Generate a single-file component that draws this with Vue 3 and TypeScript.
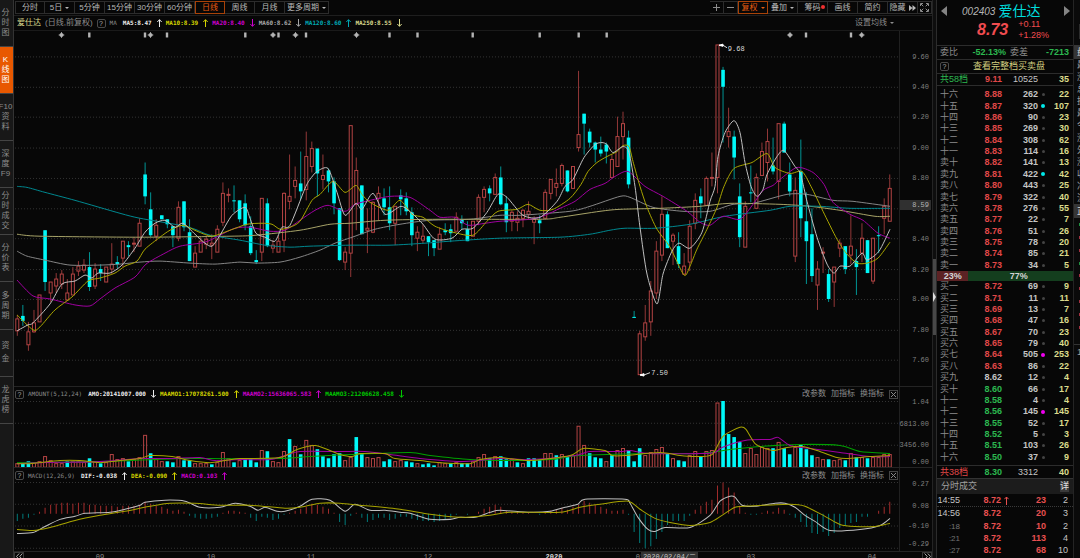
<script setup lang="ts">
type Point = [number, number]
interface Candle { x: number; up: boolean; high: number; top: number; bottom: number; low: number }
interface Bar { x: number; up: boolean; h: number }
interface Reading { text: string; tone: string; dir: 'up' | 'down' }
interface Level { name: string; price: string; tone: string; vol: number; dot: string; diff: number }
interface AxisLabel { text: string; top: number }

const FIRST_X = 17.3
const STEP = 5.557
const xAt = (i: number): number => FIRST_X + STEP * i

/* direction, high, body top, body bottom, low */
const candleSource = `
r 316 320 332 337|c 306 317 322 327|r 323 333 346 352|r 311 324 333 334|r 296 296 323 323|c 231 231 283 292
r 283 283 294 303|r 274 280 287 294|r 271 275 285 290|r 280 294 301 302|r 268 275 296 296|r 262 267 272 277
r 260 266 271 274|c 253 268 288 292|r 264 270 287 290|c 265 270 274 282|r 268 268 283 283|r 244 265 270 275
c 257 263 265 269|r 242 242 259 268|c 242 246 248 257|r 238 244 245 253|r 219 224 247 247|c 163 175 197 205
c 193 210 236 238|r 220 226 237 242|c 216 216 220 220|c 220 220 225 229|c 227 227 236 248|r 202 208 239 242
c 202 202 228 232|c 220 233 262 262|r 247 254 268 268|r 238 242 253 253|r 237 240 245 250|r 235 244 246 260
r 226 230 253 253|r 183 194 223 227|r 189 195 196 203|c 186 201 202 213|c 201 201 220 223|c 195 204 226 231
c 217 227 254 256|c 251 261 263 265|r 199 199 253 262|c 199 204 247 248|r 241 246 249 254|r 236 242 253 253
r 193 194 241 253|r 155 197 202 210|r 167 181 187 199|c 152 184 192 200|r 132 157 190 201|r 142 149 167 173
c 149 149 174 197|r 155 176 180 190|c 169 171 182 193|c 178 182 204 215|c 209 209 261 262|r 248 253 263 271
r 126 126 254 278|r 158 171 205 231|c 186 186 235 235|r 209 229 231 254|r 202 203 233 234|r 187 194 199 221
c 189 199 208 216|c 187 208 224 231|r 207 207 224 246|c 190 196 200 216|c 193 199 212 216|c 208 213 236 247
r 227 233 239 252|r 225 237 241 244|c 237 237 243 257|c 241 241 249 257|r 228 235 250 250|c 224 231 233 236
c 225 230 234 243|r 213 218 232 232|c 216 220 224 230|c 222 230 242 242|r 222 222 237 237|r 195 198 222 226
r 187 190 198 213|c 186 189 194 202|r 174 178 195 195|c 167 178 205 206|c 197 204 223 233|r 211 213 222 232
r 212 219 223 232|r 210 211 219 228|r 202 212 215 220|r 217 220 223 245|c 216 221 224 234|r 190 193 219 219
r 180 180 194 200|r 169 184 188 197|r 164 166 184 187|c 171 171 192 193|r 167 167 189 189|r 71 135 148 152
c 114 114 124 155|c 129 132 143 148|c 142 143 150 163|c 137 150 154 157|c 143 145 152 164|r 155 160 178 178
r 117 137 167 167|r 112 124 137 160|c 131 138 185 189|c 312 318 319 319|r 332 335 376 376|r 306 324 338 342
r 282 292 323 337|r 242 252 294 300|r 197 215 256 262|c 212 215 249 249|r 234 236 242 266|c 233 247 265 269
r 254 267 275 276|r 221 227 263 272|r 194 201 224 230|c 189 197 204 219|r 177 179 206 206|r 153 178 179 187
r 45 45 178 194|c 67 70 87 143|r 108 132 137 148|c 131 137 158 180|c 184 197 238 248|r 202 207 248 248
c 166 193 194 203|r 174 178 209 209|r 143 152 176 176|r 129 142 163 182|c 138 166 172 175|r 124 124 182 200
c 122 124 153 153|c 163 175 192 197|r 178 191 257 263|c 140 172 219 238|c 193 222 242 285|c 209 235 277 283
r 262 270 286 311|r 248 253 254 274|c 270 275 300 303|r 268 268 283 308|r 240 244 249 258|c 247 247 270 275
r 216 247 256 265|c 250 262 268 296|r 224 239 254 263|c 241 241 274 274|r 239 239 282 285|c 227 236 237 254
r 199 207 219 235|r 175 189 222 222`

const candles: Candle[] = candleSource.trim().split(/[|\n]/).map((item, i) => {
  const [dir, high, top, bottom, low] = item.trim().split(' ')
  return { x: xAt(i), up: dir === 'r', high: +high, top: +top, bottom: +bottom, low: +low }
})

const volumeSource =
  'r4 c4 c6 r5 r6 r11 r7 r4 r4 c6 r6 r6 r5 c9 r6 c4 r5 r13 r8 r9 c6 r8 r10 r32 c14 r8 r6 c6 c5 r11 c7 c7 r4 r4 r4 c3 r5 r15 r9 c5 ' +
  'r7 c9 c9 c5 r17 c16 r6 r5 r16 c28 r21 c13 r27 r22 c18 c11 c9 c13 c14 r7 r10 c30 c14 r10 r9 r10 c6 c8 r6 r7 c6 c5 r4 c3 c4 c2 r5 r4 c4 r5 ' +
  'c4 c4 r6 r10 r13 c9 r11 c11 c8 r8 c5 r4 c9 c9 c8 r14 r14 c12 r13 c11 r12 r41 r22 c14 c10 c9 r6 c12 r17 r19 c17 c6 c19 r12 r15 r18 r20 c14 r9 c7 ' +
  'c6 r12 r16 c11 r16 r17 r64 c66 c33 c30 c25 r14 r19 r13 r20 r19 c19 r25 c19 c13 r20 c23 c18 c12 r10 r8 c8 r7 r8 c7 r14 c10 r10 c9 r10 r10 r13 r13'

const volumes: Bar[] = volumeSource.split(' ').map((v, i) => ({ x: xAt(i), up: v[0] === 'r', h: +v.slice(1) }))

const macdHeights: number[] = [
  -7, -5, -4, -1, 2, 6, 9, 10, 11, 11, 10, 11, 11, 9, 9, 8, 8, 8, 7, 8, 8, 8, 9, 12, 10, 8, 7, 5, 3, 4, 2, -2, -4, -5, -5, -4, -3, 1, 3, 3,
  2, 1, -4, -7, -3, -4, -6, -5, -1, 1, 3, 5, 7, 10, 9, 7, 5, 1, -8, -11, -2, 1, -4, -8, -6, -4, -4, -6, -5, -3, -3, -5, -6, -7, -7, -8, -7, -6, -4, -1,
  0, -1, 0, 2, 5, 7, 9, 7, 3, 2, 2, 1, 1, 0, -1, 2, 3, 4, 6, 4, 7, 9, 13, 11, 9, 7, 5, 3, 3, 4, -1, -18, -29, -34, -32, -25, -18, -11, -7, -7,
  -7, -2, 4, 8, 12, 14, 28, 31, 26, 21, 8, 1, -1, -1, 1, 3, 2, 6, 4, -1, -4, -8, -13, -19, -20, -18, -22, -19, -14, -12, -9, -8, -3, -3, 0, 3, 7, 12,
]
const macdBars: Bar[] = macdHeights.map((h, i) => ({ x: xAt(i), up: h > 0, h: Math.abs(h) }))

/* Catmull-Rom smoothing through the sampled points */
function curve(source: string): string {
  const p: Point[] = source.split(' ').map((s) => s.split(',').map(Number) as Point)
  let d = `M${p[0][0]} ${p[0][1]}`
  for (let i = 0; i < p.length - 1; i++) {
    const a = p[Math.max(0, i - 1)]
    const b = p[i]
    const c = p[i + 1]
    const e = p[Math.min(p.length - 1, i + 2)]
    d += `C${b[0] + (c[0] - a[0]) / 8} ${b[1] + (c[1] - a[1]) / 8} ${c[0] - (e[0] - b[0]) / 8} ${c[1] - (e[1] - b[1]) / 8} ${c[0]} ${c[1]}`
  }
  return d
}

const priceLines = [
  { tone: 'l-grey', d: curve('17,252 27,257 45,261 70,266 100,266 120,265 140,263 160,262 190,264 215,265 240,263 256,264 280,263 300,258 320,251 335,244 355,237 375,230 400,225 430,221 470,220 500,216 520,216 570,212 590,207 620,197 630,198 653,208 683,212 710,212 733,205 753,204 787,195 807,195 833,201 853,202 890,207') },
  { tone: 'l-pale', d: curve('17,235 40,237 140,238 230,237 256,236 300,231 330,225 350,224 385,221 440,220 540,220 560,218 600,212 620,210 660,209 700,207 730,204 780,205 810,207 840,211 875,217 890,217') },
  { tone: 'l-teal', d: curve('17,187 27,188 45,193 75,201 120,214 140,219 180,226 195,230 210,236 240,241 265,246 290,248 310,247 350,246 390,246 425,244 450,242 500,239 560,238 590,235 610,231 625,229 655,229 690,225 725,217 770,211 790,207 820,207 850,209 890,209') },
  { tone: 'l-magenta', d: curve('17,281 33,297 50,300 75,306 90,307 100,300 115,289 135,278 146,265 165,254 180,247 205,243 220,236 235,229 250,228 270,232 285,231 300,221 315,211 328,206 345,212 355,205 370,201 390,197 410,198 430,211 440,218 455,218 468,226 485,224 500,222 530,220 545,216 560,209 575,202 590,190 605,184 615,177 628,172 645,187 663,197 687,212 700,223 710,226 723,217 740,220 753,205 763,191 773,186 780,180 797,168 813,173 824,185 833,203 850,215 863,221 878,234 890,239') },
  { tone: 'l-yellow', d: curve('17,316 33,331 40,328 55,311 72,298 88,282 100,279 115,274 125,267 137,262 145,250 160,238 170,231 183,226 197,232 212,237 230,231 247,225 262,224 272,225 280,230 290,228 300,222 312,201 320,195 333,182 345,193 356,186 362,195 370,203 388,211 400,201 412,215 423,218 435,227 453,233 473,236 487,222 498,212 517,210 528,205 540,211 553,210 570,199 581,185 588,172 597,163 607,157 617,152 623,146 629,147 633,162 640,187 647,208 657,230 670,248 684,276 690,267 697,250 707,230 717,208 724,187 734,169 752,163 767,154 775,168 790,174 802,172 811,187 823,212 837,240 847,255 857,264 867,264 878,259 890,243') },
  { tone: 'l-white', d: curve('17,332 28,326 33,324 50,305 62,285 75,282 85,276 92,279 98,274 110,274 122,266 135,249 145,233 155,224 165,221 175,228 183,224 195,235 205,244 212,247 220,236 232,216 245,208 250,219 256,234 265,238 275,242 282,228 290,226 305,189 310,180 317,172 328,169 337,193 345,216 356,204 362,210 373,194 385,215 401,207 412,214 423,225 435,240 452,239 462,230 473,229 487,213 498,195 507,198 523,216 540,218 557,202 565,187 573,180 584,158 595,145 602,143 607,145 613,153 623,147 629,153 635,187 640,228 647,275 657,305 663,275 672,252 679,244 690,249 702,233 710,202 715,187 718,157 725,133 734,121 740,133 745,163 751,187 757,197 763,190 767,175 777,157 784,151 795,167 800,173 804,189 807,202 817,238 827,265 834,274 840,267 850,267 862,254 867,261 879,252 890,230') },
]

const volumeLines = [
  { tone: 'l-green', d: curve('17,463 100,462 180,459 210,459 280,459 310,457 350,455 410,453 430,456 470,460 510,461 550,460 580,456 650,454 700,454 730,450 760,447 800,445 840,446 860,452 890,454') },
  { tone: 'l-magenta', d: curve('17,464 40,463 100,462 140,459 170,459 200,458 215,461 240,460 270,460 285,456 300,452 340,452 365,452 390,455 420,459 460,462 500,459 530,460 575,456 590,452 620,452 630,451 650,454 700,454 715,453 722,448 745,441 770,440 778,438 790,446 810,449 840,453 870,457 890,457') },
  { tone: 'l-yellow', d: curve('17,464 30,464 60,461 80,461 100,463 120,461 140,459 150,456 172,457 190,461 210,463 225,461 240,459 280,458 297,450 315,446 330,451 340,455 352,457 360,454 385,454 395,459 420,461 440,463 470,464 480,460 500,458 530,461 570,456 583,449 605,451 612,456 625,456 660,453 680,456 695,457 712,455 723,437 740,428 746,430 756,445 773,451 787,448 803,447 820,452 837,458 847,459 870,457 890,456') },
]

const macdLines = [
  { tone: 'l-white', d: curve('17,534 33,533 45,527 60,520 75,517 85,514 110,513 125,510 140,506 145,503 165,501 185,502 200,508 220,508 235,504 250,507 258,511 265,508 277,512 285,512 300,507 312,500 330,501 345,512 355,505 370,511 385,511 400,513 410,514 430,520 450,520 460,518 475,518 490,513 500,511 530,513 550,512 565,508 578,505 585,500 625,500 630,504 638,518 648,530 655,532 665,528 690,528 710,516 720,502 730,497 735,498 742,506 755,507 775,504 785,504 795,508 805,516 815,522 830,531 860,530 880,526 890,519') },
  { tone: 'l-yellow', d: curve('17,530 33,531 50,528 75,521 100,516 125,512 150,507 170,504 195,504 220,506 250,506 285,509 300,508 320,504 340,504 360,506 400,510 430,515 460,518 490,516 510,513 560,513 580,508 600,505 628,502 640,510 655,519 670,523 690,526 710,523 722,516 735,508 745,507 790,505 805,507 825,517 840,525 855,527 875,527 885,525 890,524') },
]

const eventBars: number[] = [89.3, 145, 167, 245.3, 278.5, 306, 389.5, 417.5, 472.7, 539.7, 578.7, 606.7, 806, 851]
const eventStars: number[] = [61.5, 150.5, 273, 295.5, 356.5, 790, 861.7]

const PRICE_TOP = 31
const PRICE_H = 356
const priceGrid: number[] = [57, 87.5, 117.5, 148.5, 179, 209.5, 239.5, 270.5, 300.5, 331.5, 361.5]
const priceLabels: AxisLabel[] = priceGrid.map((y, i) => ({ text: (9.6 - 0.2 * i).toFixed(2), top: ((y - PRICE_TOP) / PRICE_H) * 100 }))
const volumeLabels: AxisLabel[] = [
  { text: '1.04', top: 19 }, { text: '6813.00', top: 46 }, { text: '3456.00', top: 72 }, { text: '0.00', top: 93 },
]
const macdLabels: AxisLabel[] = [
  { text: '0.27', top: 19 }, { text: '0.08', top: 45 }, { text: '-0.10', top: 70 }, { text: '-0.29', top: 91 },
]

const dates = [
  { text: '09', x: 100 }, { text: '10', x: 211 }, { text: '11', x: 311 }, { text: '12', x: 428 },
  { text: '2020', x: 554, year: true }, { text: '02', x: 640 }, { text: '03', x: 751 }, { text: '04', x: 872 },
].map((d) => ({ ...d, left: ((d.x - 14) / 918) * 100 }))

const rail: string[][] = [
  ['分', '时', '图'], ['K', '线', '图'], ['F10', '资', '料'], ['深', '度', 'F9'], ['分', '时', '成', '交'],
  ['分', '价', '表'], ['多', '周', '期'], ['资', '金'], ['龙', '虎', '榜'],
]

const periods = [
  { text: '分时' }, { text: '5日', menu: true }, { text: '5分钟' }, { text: '15分钟' }, { text: '30分钟' },
  { text: '60分钟' }, { text: '日线', active: true }, { text: '周线' }, { text: '月线' }, { text: '更多周期', menu: true, wide: true },
]
const tools = [
  { text: '复权', active: true, menu: true }, { text: '叠加', menu: true }, { text: '筹码', badge: true },
  { text: '画线' }, { text: '简约' }, { text: '隐藏', hide: true },
]

const maReadings: Reading[] = [
  { text: 'MA5:8.47', tone: 't-white', dir: 'up' }, { text: 'MA10:8.39', tone: 't-yellow', dir: 'up' },
  { text: 'MA20:8.40', tone: 't-magenta', dir: 'down' }, { text: 'MA60:8.62', tone: 't-grey', dir: 'down' },
  { text: 'MA120:8.60', tone: 't-teal', dir: 'up' }, { text: 'MA250:8.55', tone: 't-pale', dir: 'down' },
]
const amountReadings: Reading[] = [
  { text: 'AMO:20141007.000', tone: 't-white', dir: 'down' }, { text: 'MAAMO1:17078261.500', tone: 't-yellow', dir: 'up' },
  { text: 'MAAMO2:15636065.583', tone: 't-magenta', dir: 'up' }, { text: 'MAAMO3:21206628.458', tone: 't-green', dir: 'down' },
]
const macdReadings: Reading[] = [
  { text: 'DIF:-0.038', tone: 't-white', dir: 'up' }, { text: 'DEA:-0.090', tone: 't-yellow', dir: 'up' },
  { text: 'MACD:0.103', tone: 't-magenta', dir: 'up' },
]
const paneActions: string[] = ['改参数', '加指标', '换指标']

const level = (line: string): Level => {
  const [name, price, vol, diff, dot = ''] = line.split(' ')
  const value = +price
  return { name, price, vol: +vol, diff: +diff, dot, tone: value > 8.62 ? 't-red' : value < 8.62 ? 't-lime' : 't-light' }
}
const asks: Level[] = [
  '十六 8.88 262 22', '十五 8.87 320 107 dot-cyan', '十四 8.86 90 23', '十三 8.85 269 30', '十二 8.84 308 62', '十一 8.83 114 16',
  '卖十 8.82 141 13', '卖九 8.81 422 42 dot-cyan', '卖八 8.80 443 25', '卖七 8.79 322 40', '卖六 8.78 276 55', '卖五 8.77 22 7',
  '卖四 8.76 51 26', '卖三 8.75 78 20', '卖二 8.74 85 21', '卖一 8.73 34 5',
].map(level)
const bids: Level[] = [
  '买一 8.72 69 9', '买二 8.71 11 11', '买三 8.69 13 7', '买四 8.68 47 16', '买五 8.67 70 23', '买六 8.65 79 40',
  '买七 8.64 505 253 dot-magenta', '买八 8.63 86 22', '买九 8.62 12 4', '买十 8.60 66 17', '十一 8.58 4 4',
  '十二 8.56 145 145 dot-magenta', '十三 8.55 52 17', '十四 8.52 5 3', '十五 8.51 103 26', '十六 8.50 37 9',
].map(level)
const books = [asks, bids]
const bidShare = 23

const ticks = [
  { time: '14:55', price: '8.72', vol: 23, n: 2, rise: true, major: true }, { time: '14:56', price: '8.72', vol: 20, n: 3, major: true },
  { time: ':18', price: '8.72', vol: 10, n: 2 }, { time: ':21', price: '8.72', vol: 113, n: 4 }, { time: ':27', price: '8.72', vol: 68, n: 10 },
]

const edgeItems: string[] = ['最', '涨', '总', '换', '最', '今', '涨', '外', '涨', '收', '净', '流']
const edgeDots: string[] = ['g', 'r', 'r', 'g', 'r', 'r', 'r', 'r', 'r']
</script>

<template>
  <div class="terminal">
    <nav class="rail">
      <button v-for="(item, i) in rail" :key="i" class="rail-item" :class="{ on: i === 1, airy: item.length === 2 }">
        <span v-for="(part, j) in item" :key="j">{{ part }}</span>
      </button>
      <div class="rail-rest"></div>
    </nav>

    <main class="charts">
      <div class="toolbar">
        <button v-for="p in periods" :key="p.text" class="tab" :class="{ on: p.active, wide: p.wide }">
          {{ p.text }}<i v-if="p.menu" class="caret"></i>
        </button>
        <div class="spacer"></div>
        <button class="tab small" aria-label="放大"><svg width="7" height="7" viewBox="0 0 7 7"><path d="M0 3.5H7M3.5 0V7" /></svg></button>
        <button class="tab small" aria-label="缩小"><svg width="7" height="7" viewBox="0 0 7 7"><path d="M0 3.5H7" /></svg></button>
        <button v-for="t in tools" :key="t.text" class="tab" :class="{ on: t.active }">
          {{ t.text }}<i v-if="t.menu" class="caret"></i><i v-if="t.badge" class="badge"></i>
          <svg v-if="t.hide" class="solid" width="7" height="6" viewBox="0 0 7 6"><path d="M0 0L3.5 3L0 6ZM3.5 0L7 3L3.5 6Z" /></svg>
        </button>
        <button class="tab small" aria-label="全屏">
          <svg width="9" height="9" viewBox="0 0 9 9"><path d="M.5 3V.5H3M6 .5H8.5V3M8.5 6V8.5H6M3 8.5H.5V6M1 1L3.3 3.3M8 1L5.7 3.3M8 8L5.7 5.7M1 8L3.3 5.7" /></svg>
        </button>
      </div>

      <div class="info">
        <span class="info-name">爱仕达</span>
        <span class="info-mode">(日线,前复权)</span>
        <button class="help">?</button>
        <span class="tag">MA</span>
        <span v-for="r in maReadings" :key="r.text" class="reading" :class="r.tone">
          {{ r.text }}
          <svg width="5" height="8" viewBox="0 0 5 8"><path :d="r.dir === 'up' ? 'M2.5 8V.7M.3 3L2.5 .7L4.7 3' : 'M2.5 0V7.3M.3 5L2.5 7.3L4.7 5'" /></svg>
        </span>
        <div class="spacer"></div>
        <button class="link-btn setting">设置均线<i class="caret"></i></button>
      </div>

      <section class="pane pane-price">
        <div class="plot">
          <svg class="canvas" viewBox="14 31 885 356" preserveAspectRatio="none">
            <path v-for="y in priceGrid" :key="y" class="grid-line" :d="`M15 ${y}H899`" />
            <rect v-for="x in eventBars" :key="x" class="event" :x="x - 1.2" y="32.5" width="2.4" height="5" />
            <g v-for="x in eventStars" :key="x">
              <circle class="event" :cx="x" cy="35" r="2" />
              <path class="event-rays" :d="`M${x - 2.8} 35H${x + 2.8}M${x} 32.2V37.8`" />
            </g>
            <g v-for="(c, i) in candles" :key="i">
              <template v-if="c.up">
                <path class="wick-up" :d="`M${c.x} ${c.high}V${c.top}M${c.x} ${c.bottom}V${c.low}`" />
                <rect class="body-up" :x="c.x - 1.5" :y="c.top" width="3" :height="Math.max(1, c.bottom - c.top)" />
              </template>
              <template v-else>
                <path class="wick-down" :d="`M${c.x} ${c.high}V${c.low}`" />
                <rect class="body-down" :x="c.x - 1.8" :y="c.top" width="3.6" :height="c.bottom - c.top" />
              </template>
            </g>
            <path v-for="l in priceLines" :key="l.tone" class="line" :class="l.tone" :d="l.d" />
            <path class="pointer" d="M719 45.3H723L727 47.8M640 376.3H644L650 374" />
            <path class="pointer-tip" d="M719 45.3L723 44.2V46.4ZM640 376.3L644 375V377.4Z" />
          </svg>
          <span class="mark mark-high">9.68</span>
          <span class="mark mark-low">7.50</span>
        </div>
        <div class="axis">
          <span v-for="l in priceLabels" :key="l.text" class="axis-label" :style="{ top: l.top + '%' }">{{ l.text }}</span>
          <span class="axis-label current">8.59</span>
        </div>
      </section>

      <section class="pane pane-volume">
        <div class="pane-main">
          <header class="pane-head">
            <button class="help">?</button>
            <span class="tag">AMOUNT(5,12,24)</span>
            <span v-for="r in amountReadings" :key="r.text" class="reading" :class="r.tone">
              {{ r.text }}
              <svg width="5" height="8" viewBox="0 0 5 8"><path :d="r.dir === 'up' ? 'M2.5 8V.7M.3 3L2.5 .7L4.7 3' : 'M2.5 0V7.3M.3 5L2.5 7.3L4.7 5'" /></svg>
            </span>
            <div class="spacer"></div>
            <button v-for="a in paneActions" :key="a" class="link-btn">{{ a }}</button>
            <button class="close" aria-label="关闭"><svg width="5" height="5" viewBox="0 0 5 5"><path d="M0 0L5 5M5 0L0 5" /></svg></button>
          </header>
          <div class="plot">
            <svg class="canvas" viewBox="14 402 885 66" preserveAspectRatio="none">
              <path class="grid-line" d="M15 402.5H899M15 424H899M15 445.7H899" />
              <g v-for="(b, i) in volumes" :key="i">
                <rect v-if="b.up" class="body-up" :x="b.x - 1.5" :y="468 - b.h" width="3" :height="b.h - 0.5" />
                <rect v-else class="body-down" :x="b.x - 1.8" :y="467.7 - b.h" width="3.6" :height="b.h" />
              </g>
              <path v-for="l in volumeLines" :key="l.tone" class="line" :class="l.tone" :d="l.d" />
            </svg>
          </div>
        </div>
        <div class="axis">
          <span v-for="l in volumeLabels" :key="l.text" class="axis-label" :style="{ top: l.top + '%' }">{{ l.text }}</span>
        </div>
      </section>

      <section class="pane pane-macd">
        <div class="pane-main">
          <header class="pane-head">
            <button class="help">?</button>
            <span class="tag">MACD(12,26,9)</span>
            <span v-for="r in macdReadings" :key="r.text" class="reading" :class="r.tone">
              {{ r.text }}
              <svg width="5" height="8" viewBox="0 0 5 8"><path :d="r.dir === 'up' ? 'M2.5 8V.7M.3 3L2.5 .7L4.7 3' : 'M2.5 0V7.3M.3 5L2.5 7.3L4.7 5'" /></svg>
            </span>
            <div class="spacer"></div>
            <button v-for="a in paneActions" :key="a" class="link-btn">{{ a }}</button>
            <button class="close" aria-label="关闭"><svg width="5" height="5" viewBox="0 0 5 5"><path d="M0 0L5 5M5 0L0 5" /></svg></button>
          </header>
          <div class="plot">
            <svg class="canvas" viewBox="14 483 885 68" preserveAspectRatio="none">
              <path class="grid-line" d="M15 483.5H899M15 505H899M15 526.5H899M15 548.5H899" />
              <path v-for="(b, i) in macdBars" :key="i" :class="b.up ? 'macd-up' : 'macd-down'" :d="`M${b.x} 514.5V${b.up ? 514.5 - b.h : 514.5 + b.h}`" />
              <path v-for="l in macdLines" :key="l.tone" class="line" :class="l.tone" :d="l.d" />
            </svg>
          </div>
        </div>
        <div class="axis">
          <span v-for="l in macdLabels" :key="l.text" class="axis-label" :style="{ top: l.top + '%' }">{{ l.text }}</span>
        </div>
      </section>

      <footer class="dates">
        <button class="page-btn" aria-label="更早"><svg width="7" height="7" viewBox="0 0 7 7"><path d="M3.2 .5L.5 3.5L3.2 6.5M6.4 .5L3.7 3.5L6.4 6.5" /></svg></button>
        <span v-for="d in dates" :key="d.text" class="date" :class="{ year: d.year }" :style="{ left: d.left + '%' }">{{ d.text }}</span>
        <span class="date-tag">2020/02/04/二</span>
        <div class="spacer"></div>
        <button class="page-btn" aria-label="更晚"><svg width="7" height="7" viewBox="0 0 7 7"><path d="M.6 .5L3.3 3.5L.6 6.5M3.8 .5L6.5 3.5L3.8 6.5" /></svg></button>
      </footer>
    </main>

    <div class="splitter">
      <button class="thumb" aria-label="展开侧栏"><svg width="3" height="10" viewBox="0 0 3 10"><path d="M0 0L3 5L0 10Z" /></svg></button>
    </div>

    <aside class="quote">
      <header class="quote-head">
        <button class="step" aria-label="上一只"><svg width="6" height="10" viewBox="0 0 6 10"><path d="M6 0L0 5L6 10Z" /></svg></button>
        <div class="ident">
          <div class="ident-row"><span class="code">002403</span><span class="stock">爱仕达</span></div>
          <div class="price-row">
            <strong class="last">8.73</strong>
            <div class="change"><span>+0.11</span><span>+1.28%</span></div>
          </div>
        </div>
        <button class="step" aria-label="下一只"><svg width="6" height="10" viewBox="0 0 6 10"><path d="M0 0L6 5L0 10Z" /></svg></button>
      </header>
      <div class="ratio">
        <span class="label">委比</span><b class="t-lime">-52.13%</b><span class="label">委差</span><b class="t-lime">-7213</b>
      </div>
      <div class="full-book"><button class="help">?</button><a href="#">查看完整档买卖盘</a></div>

      <div class="total total-ask">
        <span class="t-lime">共58档</span><b class="t-red">9.11</b><span class="t-light">10525</span><i></i><b class="t-pale">35</b>
      </div>
      <template v-for="(book, k) in books" :key="k">
        <div v-if="k === 1" class="balance">
          <b class="balance-buy" :style="{ width: bidShare + '%' }">{{ bidShare }}%</b>
          <b class="balance-sell">{{ 100 - bidShare }}%</b>
        </div>
        <table class="book">
          <tbody>
            <tr v-for="l in book" :key="l.name + l.price">
              <td class="label">{{ l.name }}</td>
              <td class="num" :class="l.tone">{{ l.price }}</td>
              <td class="num t-light">{{ l.vol }}</td>
              <td class="dot-cell"><i class="dot" :class="l.dot"></i></td>
              <td class="num t-pale">{{ l.diff }}</td>
            </tr>
          </tbody>
        </table>
      </template>
      <div class="total total-bid">
        <span class="t-red">共38档</span><b class="t-lime">8.30</b><span class="t-light">3312</span><i></i><b class="t-pale">40</b>
      </div>

      <div class="ticks-head"><span>分时成交</span><button>详</button></div>
      <table class="ticks">
        <tbody>
          <tr v-for="t in ticks" :key="t.time">
            <td class="time" :class="{ minor: !t.major }">{{ t.time }}</td>
            <td class="tick-price">{{ t.price }}</td>
            <td class="rise"><svg v-if="t.rise" width="5" height="9" viewBox="0 0 5 9"><path d="M2.5 9V1M.4 3.2L2.5 1L4.6 3.2" /></svg></td>
            <td class="tick-vol">{{ t.vol }}</td>
            <td class="tick-n">{{ t.n }}</td>
          </tr>
        </tbody>
      </table>
    </aside>

    <div class="edge">
      <div class="edge-top"></div>
      <div class="edge-head">盘</div>
      <div class="edge-list"><span v-for="(e, i) in edgeItems" :key="i">{{ e }}</span></div>
      <div class="edge-head">正</div>
      <div class="edge-dots"><i v-for="(d, i) in edgeDots" :key="i" :class="d"></i></div>
      <div class="edge-foot">1</div>
    </div>
  </div>
</template>

<style>
body {
  margin: 0;
  background: #070707;
}
</style>

<style scoped>
.terminal {
  display: grid;
  grid-template-columns: 14px minmax(0, 1fr) 5px 136px 7px;
  height: 100vh;
  min-height: 500px;
  overflow: hidden;
  background: #070707;
  color: #b4b4b4;
  font: 8px/10px "Liberation Sans", "Noto Sans CJK SC", sans-serif;
}
.terminal * {
  box-sizing: border-box;
}
button {
  margin: 0;
  padding: 0;
  border: 0;
  background: none;
  color: inherit;
  font: inherit;
}
svg {
  display: block;
  flex: none;
  fill: none;
  stroke: currentColor;
  stroke-width: 1;
}
.spacer {
  flex: 1;
}
.t-white { color: #ededed; }
.t-light { color: #c4c4c4; }
.t-grey { color: #a8a8a8; }
.t-yellow { color: #d4d400; }
.t-magenta { color: #cc00cc; }
.t-teal { color: #00a8b4; }
.t-pale { color: #dada8c; }
.t-green { color: #00c800; }
.t-red { color: #e04848; }
.t-lime { color: #2cb850; }

/* left rail */
.rail {
  display: flex;
  flex-direction: column;
  border-right: 1px solid #333;
  background: #181818;
}
.rail-item {
  display: flex;
  flex: 47 1 0;
  flex-direction: column;
  align-items: center;
  justify-content: center;
  padding-right: 2px;
  border-bottom: 1px solid #444;
  color: #8c8c8c;
}
.rail-item.airy {
  gap: 3px;
}
.rail-item.on {
  background: #e85800;
  color: #fff;
}
.rail-rest {
  flex: 137 1 0;
}

/* toolbar */
.charts {
  display: flex;
  flex-direction: column;
  min-width: 0;
}
.toolbar {
  display: flex;
  flex: none;
  height: 16px;
  padding: 1px 0 1px 1px;
  border-bottom: 1px solid #1e1e1e;
}
.tab {
  position: relative;
  display: flex;
  align-items: center;
  justify-content: center;
  gap: 3px;
  min-width: 30px;
  border: 1px solid #2c2c2c;
  border-left-width: 0;
  color: #b8b8b8;
}
.tab:first-child {
  border-left-width: 1px;
}
.tab.wide {
  min-width: 44px;
}
.tab.small {
  min-width: 14px;
  color: #8c8c8c;
}
.tab.on {
  border: 1px solid #a84208;
  color: #e85c10;
}
.caret {
  border: 2px solid transparent;
  border-top-color: currentColor;
  border-bottom-width: 0;
}
.badge {
  position: absolute;
  top: 3px;
  right: 2px;
  width: 4px;
  height: 4px;
  border-radius: 50%;
  background: #f03030;
}
.solid {
  fill: currentColor;
  stroke: none;
}

/* readings */
.info,
.pane-head {
  display: flex;
  flex: none;
  align-items: center;
  gap: 4px;
  height: 15px;
  white-space: nowrap;
}
.info {
  padding: 0 6px 0 3px;
  border-bottom: 1px solid #1a1a1a;
}
.info-name {
  color: #dcdc90;
}
.info-mode {
  color: #8c8c8c;
}
.help {
  flex: none;
  width: 9px;
  height: 9px;
  border: 1px solid #4a4a4a;
  border-radius: 2px;
  color: #aaa;
  font-size: 7px;
  line-height: 7px;
}
.tag,
.reading {
  font: 6px/10px "DejaVu Sans Mono", "Liberation Mono", monospace;
}
.tag {
  margin-right: 2px;
  color: #8c8c8c;
}
.reading {
  display: flex;
  align-items: center;
  gap: 5px;
  font-weight: bold;
}
.link-btn {
  display: flex;
  align-items: center;
  gap: 3px;
  color: #8c8c8c;
}
.setting {
  margin-right: 32px;
}
.pane-head .link-btn {
  margin-right: 1px;
}
.close {
  display: grid;
  place-items: center;
  width: 9px;
  height: 9px;
  border: 1px solid #444;
  color: #888;
}

/* panes */
.pane {
  display: grid;
  grid-template-columns: minmax(0, 1fr) 33px;
  min-height: 0;
}
.pane-price {
  flex: 356 1 0;
}
.pane-volume {
  flex: 81 1 0;
}
.pane-macd {
  flex: 83 1 0;
}
.pane-volume,
.pane-macd {
  border-top: 1px solid #242424;
}
.pane-main {
  display: flex;
  flex-direction: column;
  min-height: 0;
}
.pane-head {
  height: 14px;
  padding: 1px 1px 0 1px;
}
.plot {
  position: relative;
  flex: 1;
  min-height: 0;
}
.canvas {
  position: absolute;
  inset: 0;
  width: 100%;
  height: 100%;
}
.axis {
  position: relative;
  border-left: 1px solid #202020;
}
.axis-label {
  position: absolute;
  right: 3px;
  color: #808080;
  font: 7px/10px "Liberation Mono", monospace;
  transform: translateY(-50%);
}
.axis-label.current {
  top: 49%;
  right: 1px;
  left: 0;
  padding-right: 2px;
  background: #303030;
  color: #b4b4b4;
  text-align: right;
}
.grid-line {
  stroke: #333;
  stroke-dasharray: 1 2;
}
.event {
  fill: #b4b4b4;
  stroke: none;
}
.event-rays {
  stroke: #b4b4b4;
}
.wick-up,
.body-up {
  stroke: #b44444;
}
.wick-up {
  stroke: #943838;
}
.wick-down {
  stroke: #009696;
}
.body-down {
  fill: #00f8f8;
  stroke: none;
}
.line {
  stroke-width: 1;
}
.l-white { stroke: #c0c0c0; }
.l-grey { stroke: #868686; }
.l-pale { stroke: #a8a468; }
.l-yellow { stroke: #a8a400; }
.l-magenta { stroke: #a000a0; }
.l-teal { stroke: #008890; }
.l-green { stroke: #00a000; }
.macd-up { stroke: #a42c2c; }
.macd-down { stroke: #007c7c; }
.pointer { stroke: #dcdcdc; }
.pointer-tip {
  fill: #fff;
  stroke: #fff;
}
.mark {
  position: absolute;
  color: #dcdcdc;
  font: 7px/10px "Liberation Mono", monospace;
}
.mark-high {
  top: 4%;
  left: 81%;
  margin: -1px 0 0 -3px;
}
.mark-low {
  top: 95%;
  left: 72%;
}

/* date scale */
.dates {
  position: relative;
  display: flex;
  flex: none;
  height: 7px;
  overflow: hidden;
  border-top: 1px solid #242424;
}
.page-btn {
  display: grid;
  place-items: center;
  width: 10px;
  height: 9px;
  border: 1px solid #383838;
  color: #aaa;
}
.date {
  position: absolute;
  top: 0;
  color: #8c8c8c;
  font: 7px/10px "Liberation Mono", monospace;
  transform: translateX(-50%);
}
.date.year {
  color: #d8d8d8;
  font-weight: bold;
}
.date-tag {
  position: absolute;
  left: 68.3%;
  width: 57px;
  overflow: hidden;
  background: #333;
  color: #c8c8c8;
  font: 7px/10px "Liberation Mono", "Noto Sans CJK SC", monospace;
  text-align: center;
  white-space: nowrap;
}

/* splitter */
.splitter {
  display: flex;
  align-items: center;
  border-right: 1px solid #2c2c2c;
  border-left: 1px solid #242424;
  background: #0e0e0e;
}
.thumb {
  display: grid;
  place-items: center;
  width: 4px;
  height: 76px;
  margin-top: 36px;
  background: #484848;
  color: #e0e0e0;
}
.thumb svg,
.step svg {
  fill: currentColor;
  stroke: none;
}

/* quote panel */
.quote {
  display: flex;
  flex-direction: column;
  min-height: 0;
  font-size: 9px;
  line-height: 11px;
}
.quote-head {
  display: flex;
  flex: none;
  align-items: flex-start;
  justify-content: space-between;
  height: 46px;
  padding: 3px 3px 0 4px;
  border-bottom: 1px solid #2c2c2c;
}
.step {
  padding-top: 3px;
  color: #848484;
}
.ident-row {
  display: flex;
  align-items: center;
  gap: 3px;
  height: 16px;
}
.code {
  color: #b4b4b4;
  font-size: 10px;
  font-style: italic;
}
.stock {
  color: #00dede;
  font-size: 14px;
  line-height: 16px;
}
.price-row {
  display: flex;
  align-items: center;
  gap: 10px;
  padding-left: 15px;
  color: #f04c50;
}
.last {
  font-size: 16px;
  font-style: italic;
  line-height: 20px;
}
.change {
  display: flex;
  flex-direction: column;
}
.label {
  color: #8c8c8c;
}
.ratio,
.full-book {
  flex: none;
  align-items: center;
  height: 14px;
  padding: 0 4px 0 3px;
  border-bottom: 1px solid #2c2c2c;
  white-space: nowrap;
}
.ratio {
  display: grid;
  grid-template-columns: 30px 35px 22px minmax(0, 1fr);
  column-gap: 4px;
}
.ratio {
  grid-template-columns: 26px 36px 22px minmax(0, 1fr);
}
.ratio b {
  text-align: right;
}
.full-book {
  display: flex;
}
.full-book a {
  flex: 1;
  color: #d4d080;
  text-align: center;
  text-decoration: none;
}
.total {
  display: grid;
  grid-template-columns: 30px 32px 36px 10px minmax(0, 1fr);
  flex: none;
  align-items: center;
  height: 12px;
  padding: 0 4px 0 3px;
  text-align: right;
  white-space: nowrap;
}
.total span:first-child {
  text-align: left;
}
.total-ask {
  margin-bottom: 3px;
  border-bottom: 1px solid #2c2c2c;
}
.total-bid {
  height: 13px;
  margin-top: 2px;
  border-top: 1px solid #2c2c2c;
}
.book,
.ticks {
  display: flex;
  flex-direction: column;
  min-height: 0;
}
.book {
  flex: 182 1 0;
}
.book tbody,
.ticks tbody {
  display: flex;
  flex: 1;
  flex-direction: column;
  min-height: 0;
}
.book tr {
  display: grid;
  grid-template-columns: 30px 32px 36px 10px minmax(0, 1fr);
  flex: 1 1 0;
  align-items: center;
  min-height: 0;
  padding: 0 4px 0 3px;
}
td {
  padding: 0;
}
.num {
  font-weight: bold;
  text-align: right;
}
.dot-cell {
  display: grid;
  place-items: center;
}
.dot {
  width: 3px;
  height: 3px;
  border-radius: 50%;
  background: #444;
}
.dot-cyan,
.dot-magenta {
  width: 4px;
  height: 4px;
}
.dot-cyan { background: #00e8e8; }
.dot-magenta { background: #f000f0; }
.balance {
  display: flex;
  flex: none;
  height: 10px;
  color: #d4d4d4;
  line-height: 10px;
  text-align: center;
}
.balance-buy {
  background: #5c2224;
}
.balance-sell {
  flex: 1;
  padding-right: 4px;
  background: #143e1e;
}
.ticks-head {
  display: flex;
  flex: none;
  align-items: center;
  justify-content: space-between;
  height: 16px;
  padding: 0 4px;
  border-top: 1px solid #333;
  background: #1c1c1c;
  color: #a0a0a0;
}
.ticks-head button {
  background: #3a3a3a;
  color: #e0e0e0;
}
.ticks {
  flex: 63 1 0;
  padding-bottom: 1px;
}
.ticks tr {
  display: grid;
  grid-template-columns: 23px 41px 8px 37px 22px;
  flex: 1 1 0;
  align-items: center;
  text-align: right;
}
.ticks tr:first-child {
  border-bottom: 1px dotted #3a3a3a;
}
.time {
  color: #c4c4c4;
}
.time.minor {
  color: #747474;
  font-size: 8px;
}
.tick-price,
.tick-vol {
  color: #e85050;
  font-weight: bold;
}
.rise {
  display: grid;
  place-items: center end;
  color: #e85050;
}
.tick-n {
  color: #c4c4c4;
}

/* far-right strip */
.edge {
  display: flex;
  flex-direction: column;
  overflow: hidden;
  border-left: 1px solid #242424;
  background: #0a0a0a;
  color: #a0a0a0;
  font-size: 9px;
}
.edge-top {
  flex: none;
  height: 15px;
  margin: 24px 0 6px 5px;
  background: #2c2c2c;
}
.edge-head {
  flex: none;
  height: 14px;
  padding-left: 3px;
  background: #363636;
  color: #e0e0e0;
  line-height: 14px;
}
.edge-list {
  display: flex;
  flex: none;
  flex-direction: column;
  justify-content: space-around;
  height: 145px;
  padding-left: 3px;
}
.edge-dots {
  display: flex;
  flex: none;
  flex-direction: column;
  justify-content: space-around;
  align-items: flex-end;
  height: 126px;
  padding-bottom: 10px;
}
.edge-dots i {
  width: 1px;
  height: 3px;
  background: #a03040;
}
.edge-dots .g {
  background: #209040;
}
.edge-foot {
  padding-left: 3px;
  border-top: 1px solid #333;
  line-height: 14px;
}
</style>
